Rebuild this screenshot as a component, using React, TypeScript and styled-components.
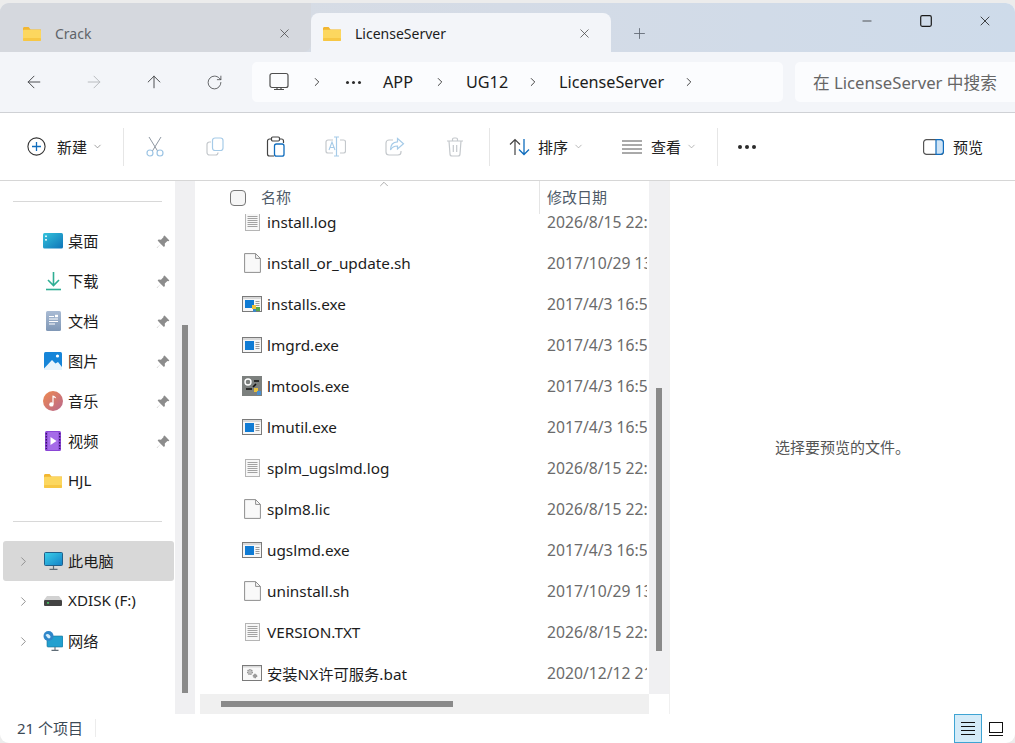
import * as React from "react";
import styled, { createGlobalStyle } from "styled-components";
import {
  ArrowLeft,
  ArrowRight,
  ArrowUp,
  ChevronDown,
  ChevronRight,
  ChevronUp,
  Minus,
  Plus,
  RotateCw,
  X,
} from "lucide-react";

const GlobalStyle = createGlobalStyle`
  html, body {
    margin: 0;
    padding: 0;
    background: #ececec;
    overflow: hidden;
  }
  * {
    box-sizing: border-box;
  }
`;

const FONT = `"Noto Sans", "Noto Sans CJK SC", sans-serif`;

const Window = styled.div`
  display: flex;
  flex-direction: column;
  width: 1015px;
  height: 740px;
  margin-top: 3px;
  background: white;
  border-radius: 9px;
  overflow: hidden;
  font-family: ${FONT};
  color: #1c1c1c;
`;

const TabBar = styled.div`
  display: flex;
  align-items: flex-end;
  height: 49px;
  flex-shrink: 0;
  background: linear-gradient(90deg, #d9dde3 0%, #d4dbe6 50%, #cedbea 100%);
`;

const Tab = styled.div<{ $active?: boolean }>`
  display: flex;
  align-items: center;
  width: ${(p) => (p.$active ? "300px" : "311px")};
  height: ${(p) => (p.$active ? "39px" : "49px")};
  padding: ${(p) => (p.$active ? "2px 19px 0 12px" : "12px 19px 0 23px")};
  background: ${(p) => (p.$active ? "#f3f5f9" : "#d5d8de")};
  border-radius: ${(p) => (p.$active ? "8px 8px 0 0" : "0 0 8px 0")};
  color: ${(p) => (p.$active ? "#1c1c1c" : "#5f6469")};
  font-size: 14px;
`;

const TabLabel = styled.span`
  flex: 1;
  margin-left: 14px;
`;

const NewTab = styled.div`
  display: flex;
  align-items: center;
  justify-content: center;
  width: 57px;
  height: 37px;
  color: #5f6670;
`;

const WindowControls = styled.div`
  display: flex;
  align-self: flex-start;
  margin-left: auto;
  padding: 8px 1px 0 0;
  color: #1a1a1a;
`;

const WindowControl = styled.div`
  display: flex;
  align-items: center;
  justify-content: center;
  width: 59px;
  height: 20px;
`;

const NavBar = styled.div`
  display: flex;
  align-items: center;
  height: 61px;
  flex-shrink: 0;
  padding-left: 4px;
  background: #f3f5f9;
  border-bottom: 1px solid #cfd1d5;
`;

const NavButton = styled.div<{ $disabled?: boolean }>`
  display: flex;
  align-items: center;
  justify-content: center;
  width: 60px;
  color: ${(p) => (p.$disabled ? "#b9bcc0" : "#4d4f52")};
`;

const AddressBox = styled.div`
  display: flex;
  align-items: center;
  width: 531px;
  height: 40px;
  margin-left: 8px;
  padding-left: 17px;
  background: #fbfcfe;
  border-radius: 5px;
  font-size: 16.2px;
  color: #1c1c1c;
`;

const Crumb = styled.span<{ $width: number; $pad?: number }>`
  display: flex;
  align-items: center;
  width: ${(p) => p.$width}px;
  padding-left: ${(p) => p.$pad ?? 0}px;
  flex-shrink: 0;
`;

const Sep = styled.span`
  display: flex;
  align-items: center;
  justify-content: center;
  width: 52px;
  flex-shrink: 0;
  color: #2a2a2a;
`;

const Dots = styled.span`
  display: flex;
  gap: 3px;
`;

const Dot = styled.i<{ $size: number }>`
  display: block;
  width: ${(p) => p.$size}px;
  height: ${(p) => p.$size}px;
  border-radius: 50%;
  background: #2b2b2b;
`;

const SearchBox = styled.div`
  display: flex;
  align-items: center;
  flex: 1;
  height: 40px;
  margin-left: 12px;
  padding-left: 18px;
  background: #fbfcfe;
  border-radius: 5px 0 0 5px;
  font-size: 16.7px;
  color: #666;
  white-space: nowrap;
`;

const Toolbar = styled.div`
  display: flex;
  align-items: center;
  height: 68px;
  flex-shrink: 0;
  background: white;
  border-bottom: 1px solid #d6d6d6;
  font-size: 15px;
  color: #222;
`;

const ToolGroup = styled.div<{ $width: number; $pad?: number; $gap?: number }>`
  display: flex;
  align-items: center;
  gap: ${(p) => p.$gap ?? 8}px;
  width: ${(p) => p.$width}px;
  padding-left: ${(p) => p.$pad ?? 0}px;
  flex-shrink: 0;
`;

const ToolDivider = styled.div`
  width: 1px;
  height: 38px;
  flex-shrink: 0;
  background: #e6e6e6;
`;

const IconButton = styled.div`
  display: flex;
  align-items: center;
  justify-content: center;
  width: 60px;
  flex-shrink: 0;
`;

const Caret = styled.span<{ $color?: string; $shift: number }>`
  display: flex;
  margin-left: ${(p) => p.$shift}px;
  color: ${(p) => p.$color ?? "#777"};
`;

const Body = styled.div`
  display: flex;
  height: 533px;
  flex-shrink: 0;
`;

const Sidebar = styled.nav`
  width: 175px;
  flex-shrink: 0;
  padding: 20px 0 0 3px;
  font-size: 15.2px;
`;

const Divider = styled.div`
  height: 1px;
  margin: 0 13px 19px 10px;
  background: #d8d8d8;
`;

const SideGroup = styled.div`
  margin-bottom: 20px;
`;

const SideRow = styled.div<{ $selected?: boolean; $tree?: boolean }>`
  display: flex;
  align-items: center;
  height: 40px;
  padding-left: ${(p) => (p.$tree ? "13px" : "40px")};
  background: ${(p) => (p.$selected ? "#d8d8d8" : "transparent")};
  border-radius: 3px;
  width: 171px;
`;

const Expander = styled.span`
  display: flex;
  width: 27px;
  margin-right: 0;
  color: #8c8c8c;
`;

const SideIcon = styled.span`
  display: flex;
  align-items: center;
  justify-content: center;
  width: 20px;
  height: 24px;
  margin-right: 5px;
`;

const SideLabel = styled.span`
  flex: 1;
  margin-top: -2px;
  white-space: nowrap;
`;

const PinSlot = styled.span`
  display: flex;
  margin: 2px 4px 0 0;
`;

const VTrack = styled.div<{ $width: number; $margin: number }>`
  display: flex;
  justify-content: center;
  width: ${(p) => p.$width}px;
  flex-shrink: 0;
  margin-right: ${(p) => p.$margin}px;
  background: #f0f0f2;
`;

const VThumb = styled.div<{ $top: number; $height: number }>`
  width: 6px;
  height: ${(p) => p.$height}px;
  margin-top: ${(p) => p.$top}px;
  background: #8a8a8a;
`;

const ListColumn = styled.section`
  display: flex;
  flex-direction: column;
  width: 449px;
  flex-shrink: 0;
`;

const ListHeader = styled.div`
  position: relative;
  display: flex;
  align-items: center;
  height: 33px;
  flex-shrink: 0;
  font-size: 15px;
  color: #4f5b69;
`;

const SortMark = styled.span`
  position: absolute;
  left: 177px;
  top: -4px;
  display: flex;
  color: #777;
`;

const HeaderCheck = styled.span`
  width: 16px;
  height: 16px;
  margin: 0 15px 0 30px;
  background: #f6f6f6;
  border: 1px solid #777;
  border-radius: 4px;
  flex-shrink: 0;
`;

const HeaderName = styled.span`
  width: 278px;
  margin-top: -3px;
  flex-shrink: 0;
`;

const HeaderDate = styled.span`
  display: flex;
  align-items: center;
  height: 100%;
  padding: 0 0 3px 7px;
  border-left: 1px solid #e5e5e5;
`;

const Rows = styled.div`
  flex: 1;
  overflow: hidden;
`;

const RowsInner = styled.div`
  margin-top: -13px;
`;

const FileRow = styled.div`
  display: flex;
  align-items: center;
  height: 41px;
  font-size: 15.3px;
`;

const FileIconSlot = styled.span`
  display: flex;
  align-items: center;
  justify-content: center;
  width: 20px;
  height: 22px;
  margin: 0 5px 0 42px;
  flex-shrink: 0;
`;

const FileName = styled.span`
  width: 280px;
  flex-shrink: 0;
  white-space: nowrap;
`;

const FileDate = styled.span`
  width: 100px;
  overflow: hidden;
  font-size: 15.7px;
  white-space: nowrap;
  color: #6b6b6b;
`;

const HTrack = styled.div`
  display: flex;
  align-items: center;
  height: 20px;
  flex-shrink: 0;
  padding-left: 21px;
  background: #f0f0f0;
`;

const HThumb = styled.div`
  width: 232px;
  height: 6px;
  background: #8a8a8a;
`;

const ListAside = styled.div`
  display: flex;
  flex-direction: column;
  width: 20px;
  flex-shrink: 0;
`;

const AsideTrack = styled(VTrack)`
  flex: 1;
  margin-right: 0;
`;

const AsideCorner = styled.div`
  height: 20px;
`;

const Preview = styled.aside`
  display: flex;
  align-items: center;
  justify-content: center;
  flex: 1;
  padding-bottom: 2px;
  border-left: 1px solid #f0f0f0;
  font-size: 15px;
  color: #555;
`;

const StatusBar = styled.footer`
  display: flex;
  align-items: center;
  flex: 1;
  padding-left: 17px;
  font-size: 15px;
  color: #3c4a57;
`;

const StatusText = styled.span`
  width: 79px;
  height: 18px;
  margin-top: -2px;
  line-height: 18px;
  border-right: 1px solid #ececec;
`;

const ViewToggle = styled.div`
  display: flex;
  align-self: stretch;
  margin-left: auto;
  margin-right: 5px;
`;

const ViewButton = styled.div<{ $active?: boolean }>`
  display: flex;
  align-items: center;
  justify-content: center;
  width: 28px;
  background: ${(p) => (p.$active ? "#d4ebf8" : "transparent")};
  border: 1px solid ${(p) => (p.$active ? "#3fa4d3" : "transparent")};
`;

const Ic = ({ w, h, children }: { w: number; h: number; children: React.ReactNode }) => (
  <svg width={w} height={h} viewBox={`0 0 ${w} ${h}`} fill="none">
    {children}
  </svg>
);

const Folder = () => (
  <Ic w={18} h={14}>
    <path d="M0 1.5C0 .7.6 0 1.4 0h4.2l2 2.4H18V4H0z" fill="#f2b631" />
    <rect x="0" y="2.8" width="18" height="11.2" rx="1" fill="#fcd75f" />
    <rect x="0" y="11" width="18" height="3" rx="1" fill="#f7c744" />
  </Ic>
);

const Pc = () => (
  <Ic w={20} h={20}>
    <path d="M3 1.5h14a2 2 0 0 1 2 2v10a2 2 0 0 1-2 2H3a2 2 0 0 1-2-2v-10a2 2 0 0 1 2-2zM5 17.5h10" stroke="#4e4e4e" strokeWidth="1.2" />
    <path d="M8 15.5v2M12 15.5v2" stroke="#4e4e4e" strokeWidth="1.2" />
  </Ic>
);

const NewIcon = () => (
  <Ic w={19} h={19}>
    <circle cx="9.5" cy="9.5" r="8.6" stroke="#333" strokeWidth="1.1" />
    <path d="M9.5 5v9M5 9.5h9" stroke="#0f6cbd" strokeWidth="1.3" />
  </Ic>
);

const CutIcon = () => (
  <Ic w={18} h={21}>
    <path d="M3 1l8.6 14M15 1L6.4 15" stroke="#8f98a3" strokeWidth="1" />
    <circle cx="4" cy="17" r="3" stroke="#9cc4e4" strokeWidth="1.2" />
    <circle cx="14" cy="17" r="3" stroke="#9cc4e4" strokeWidth="1.2" />
  </Ic>
);

const CopyIcon = () => (
  <Ic w={18} h={19}>
    <rect x="6.5" y="1" width="10.5" height="12.5" rx="2.5" stroke="#a6cbe8" strokeWidth="1.2" />
    <path d="M5 5H3.5A2.5 2.5 0 0 0 1 7.5v8A2.5 2.5 0 0 0 3.5 18h6a2.5 2.5 0 0 0 2.5-2.5" stroke="#c4c8cc" strokeWidth="1.2" />
  </Ic>
);

const PasteIcon = () => (
  <Ic w={19} h={21}>
    <path d="M6 3H3.5A2 2 0 0 0 1.5 5v13a2 2 0 0 0 2 2H8" stroke="#444" strokeWidth="1.2" />
    <path d="M13 3h2.5a2 2 0 0 1 2 2v2" stroke="#444" strokeWidth="1.2" />
    <rect x="5.5" y="1" width="8" height="4" rx="1.2" stroke="#444" strokeWidth="1.2" />
    <rect x="8.5" y="8" width="9.5" height="12.2" rx="2" stroke="#0f6cbd" strokeWidth="1.3" />
  </Ic>
);

const RenameIcon = () => (
  <Ic w={21} h={21}>
    <path d="M8 4H3a2 2 0 0 0-2 2v9a2 2 0 0 0 2 2h5M15 4h3.5a2 2 0 0 1 2 2v9a2 2 0 0 1-2 2H15" stroke="#c4c8cc" strokeWidth="1.2" />
    <path d="M11.5 1v19M9 1h5M9 20h5" stroke="#a6cbe8" strokeWidth="1.2" />
    <path d="M4 14l3-8 3 8M5 11.5h4" stroke="#a6cbe8" strokeWidth="1.1" />
  </Ic>
);

const ShareIcon = () => (
  <Ic w={20} h={19}>
    <path d="M8 3H4a3 3 0 0 0-3 3v9a3 3 0 0 0 3 3h9a3 3 0 0 0 3-3v-1" stroke="#c4c8cc" strokeWidth="1.2" />
    <path d="M12.5 1.5l6 5.2-6 5.3V9C9 9 7 10 5.5 13c0-5 2.5-8 7-8.2z" stroke="#a6cbe8" strokeWidth="1.2" />
  </Ic>
);

const TrashIcon = () => (
  <Ic w={18} h={20}>
    <path d="M1 4h16M6.5 4V2.5A1.5 1.5 0 0 1 8 1h2a1.5 1.5 0 0 1 1.5 1.5V4" stroke="#c4c8cc" strokeWidth="1.2" />
    <path d="M3 4l1 13a2 2 0 0 0 2 2h6a2 2 0 0 0 2-2l1-13M7.3 8v7M10.7 8v7" stroke="#c4c8cc" strokeWidth="1.2" />
  </Ic>
);

const SortIcon = () => (
  <Ic w={21} h={18}>
    <path d="M6 17V1.5M1 6.5l5-5 5 5" stroke="#444" strokeWidth="1.2" />
    <path d="M15 1v15.5M10 11.5l5 5 5-5" stroke="#0f6cbd" strokeWidth="1.3" />
  </Ic>
);

const ViewIcon = () => (
  <Ic w={20} h={14}>
    <path d="M0 1h20M0 5h20M0 9h20M0 13h20" stroke="#555" strokeWidth="1" />
  </Ic>
);

const PreviewIcon = () => (
  <Ic w={21} h={16}>
    <rect x=".6" y=".6" width="19.8" height="14.8" rx="3" stroke="#555" strokeWidth="1.2" />
    <path d="M13 .6h4.4a3 3 0 0 1 3 3v8.8a3 3 0 0 1-3 3H13z" fill="#cfe4f6" stroke="#0f6cbd" strokeWidth="1.2" />
  </Ic>
);

const Pin = () => (
  <svg width="14" height="14" viewBox="0 0 14 14" fill="#8c8c8c">
    <path d="M8.6.6l4.8 4.8-1.1.8-.9-.2-2.6 2.6.1 2.4-1 1L4.8 8.9 1.2 12.8.8 13l.2-.5 3.8-3.6L1.6 5.6l1-1 2.4.1 2.6-2.6-.2-.9z" />
  </svg>
);

const Desktop = () => (
  <svg width="20" height="16" viewBox="0 0 20 16">
    <defs>
      <linearGradient id="desk" x1="0" y1="0" x2="1" y2="1">
        <stop offset="0" stopColor="#34c3dc" />
        <stop offset="1" stopColor="#0f74b8" />
      </linearGradient>
    </defs>
    <rect width="20" height="15.5" rx="1.5" fill="url(#desk)" />
    <rect x="2" y="2.5" width="2" height="1.6" fill="#d6f4fa" />
    <rect x="2" y="6" width="2" height="1.6" fill="#d6f4fa" />
  </svg>
);

const Download = () => (
  <svg width="15" height="20" viewBox="0 0 15 20" fill="none" stroke="#2fae94" strokeWidth="1.6">
    <path d="M7.5 1v13M2 9l5.5 5.5L13 9" />
    <path d="M0 18.5h15" />
  </svg>
);

const Docs = () => (
  <svg width="15" height="20" viewBox="0 0 15 20">
    <defs>
      <linearGradient id="doc" x1="0" y1="0" x2="0" y2="1">
        <stop offset="0" stopColor="#a9bbd4" />
        <stop offset="1" stopColor="#7f97b6" />
      </linearGradient>
    </defs>
    <rect width="15" height="20" rx="1.5" fill="url(#doc)" />
    <path d="M3 5.5h5M3 8h9M3 10.5h9M3 13h6" stroke="white" strokeWidth="1" />
    <rect x="9" y="3.8" width="3" height="2.4" fill="white" />
  </svg>
);

const Pictures = () => (
  <svg width="18" height="18" viewBox="0 0 18 18">
    <rect width="18" height="18" rx="1.5" fill="#1685d8" />
    <circle cx="13.5" cy="4" r="1.6" fill="white" />
    <path d="M0 16.5L8 8l3.5 3.5L14 10l4 5v3H0z" fill="#e8f4fc" />
  </svg>
);

const Music = () => (
  <svg width="20" height="20" viewBox="0 0 20 20">
    <defs>
      <linearGradient id="mus" x1="0" y1="0" x2="1" y2="1">
        <stop offset="0" stopColor="#ef8a4e" />
        <stop offset="1" stopColor="#b8678f" />
      </linearGradient>
    </defs>
    <circle cx="10" cy="10" r="10" fill="url(#mus)" />
    <circle cx="8.4" cy="13.4" r="2.2" fill="white" />
    <path d="M9.4 13V4.5c2 .2 3.5 1.2 3.8 3-1-.7-1.9-1-2.6-1V13z" fill="white" />
  </svg>
);

const Video = () => (
  <svg width="16" height="20" viewBox="0 0 16 20">
    <rect width="16" height="20" rx="1.5" fill="#8a45d6" />
    <rect x="2.6" y="1" width="10.8" height="18" fill="#a56be8" />
    <path d="M5.5 6l6 4-6 4z" fill="white" />
    <path d="M1.3 2v16M14.7 2v16" stroke="#2f1160" strokeWidth="1.2" strokeDasharray="1.4 1.6" />
  </svg>
);

const Computer = () => (
  <svg width="19" height="18" viewBox="0 0 19 18">
    <defs>
      <linearGradient id="pc" x1="0" y1="0" x2="1" y2="1">
        <stop offset="0" stopColor="#3cd0ea" />
        <stop offset="1" stopColor="#1381c7" />
      </linearGradient>
    </defs>
    <rect x=".5" y=".5" width="18" height="13" rx="1" fill="url(#pc)" stroke="#205f8a" />
    <path d="M9.5 14v3M5.5 17.3h8" stroke="#5f6c76" strokeWidth="1.2" />
  </svg>
);

const Disk = () => (
  <svg width="18" height="10" viewBox="0 0 18 10">
    <path d="M3 0h12l3 4H0z" fill="#d2d2d2" />
    <rect y="4" width="18" height="6" rx="1" fill="#434343" />
    <rect x="3" y="6.2" width="2" height="1.4" fill="#49d66b" />
  </svg>
);

const Network = () => (
  <svg width="20" height="20" viewBox="0 0 20 20">
    <rect x="4" y="5" width="16" height="11" rx="1" fill="#22a0cf" stroke="#1a6f95" strokeWidth=".6" />
    <path d="M12 16v3M8.5 19.4h7" stroke="#5f6c76" strokeWidth="1.1" />
    <circle cx="5.5" cy="5" r="5" fill="#2f86c9" />
    <path d="M2.5 4c1.5-1.5 3-1 4 0s1.5 2 .5 3-2.5 0-3-1-1-1-1.5-2z" fill="#d6eefb" />
  </svg>
);

const LogFile = () => (
  <svg width="15" height="18" viewBox="0 0 15 18" fill="none">
    <rect x=".5" y=".5" width="14" height="17" fill="#f7f7f7" stroke="#b5b5b5" />
    <path d="M2.5 3.5h10M2.5 5.5h10M2.5 7.5h10M2.5 9.5h10M2.5 11.5h10M2.5 13.5h10" stroke="#a2a2a2" />
  </svg>
);

const PlainFile = () => (
  <svg width="17" height="20" viewBox="0 0 17 20">
    <path d="M.6.6h11l4.8 4.8v14H.6z" fill="#f9f9f9" stroke="#8f8f8f" />
    <path d="M11.6.6v4.8h4.8" fill="none" stroke="#8f8f8f" />
  </svg>
);

const AppFrame = ({ children }: { children?: React.ReactNode }) => (
  <svg width="20" height="16" viewBox="0 0 20 16">
    <rect x=".5" y=".5" width="19" height="15" fill="#f6f6f6" stroke="#7a7a7a" />
    <path d="M1 1h18v2H1z" fill="#d9d9d9" />
    <path d="M13.5 5.5h4M13.5 7.5h4M13.5 9.5h4M13.5 11.5h4" stroke="#9a9a9a" />
    {children}
  </svg>
);

const ExeFile = () => (
  <AppFrame>
    <rect x="3" y="4" width="9" height="9" fill="#0f7bd4" />
  </AppFrame>
);

const InstallsFile = () => (
  <AppFrame>
    <rect x="3" y="4" width="9" height="8" fill="#0f7bd4" />
    <rect x="10" y="9" width="4" height="4" fill="#f0c23a" />
    <rect x="14" y="11" width="4" height="4" fill="#58a848" />
    <rect x="11" y="13" width="3" height="3" fill="#3d86c6" />
  </AppFrame>
);

const ToolsFile = () => (
  <svg width="20" height="20" viewBox="0 0 20 20">
    <rect width="20" height="20" fill="#7c807e" />
    <circle cx="6" cy="6" r="3" fill="none" stroke="white" strokeWidth="1.4" />
    <path d="M4 13h6M12 5h5M14 8l-3 3" stroke="#111" strokeWidth="1.6" />
    <rect x="12" y="12" width="4" height="4" fill="#e7c13c" />
    <rect x="15" y="15" width="4" height="4" fill="#4a8fcf" />
  </svg>
);

const BatFile = () => (
  <svg width="20" height="16" viewBox="0 0 20 16">
    <rect x=".5" y=".5" width="19" height="15" fill="#f8f8f8" stroke="#7a7a7a" />
    <path d="M1 1h18v1.5H1z" fill="#d9d9d9" />
    <circle cx="8" cy="7" r="2.4" fill="#c0c0c0" stroke="#8c8c8c" strokeWidth="1.2" strokeDasharray="1.2 .7" />
    <circle cx="13" cy="11" r="1.8" fill="#9a9a9a" stroke="#7a7a7a" strokeDasharray="1 .6" />
  </svg>
);

const ListViewIcon = () => (
  <Ic w={14} h={14}>
    <path d="M0 .5h14M0 4.5h14M0 8.5h14M0 12.5h14" stroke="#111" strokeWidth="1" />
  </Ic>
);

const TileViewIcon = () => (
  <Ic w={14} h={14}>
    <rect x=".5" y=".5" width="13" height="10" stroke="#111" fill="none" />
    <path d="M0 13.5h14" stroke="#111" />
  </Ic>
);

const pinned: { name: string; icon: React.ReactNode; pin?: boolean }[] = [
  { name: "桌面", icon: <Desktop />, pin: true },
  { name: "下载", icon: <Download />, pin: true },
  { name: "文档", icon: <Docs />, pin: true },
  { name: "图片", icon: <Pictures />, pin: true },
  { name: "音乐", icon: <Music />, pin: true },
  { name: "视频", icon: <Video />, pin: true },
  { name: "HJL", icon: <Folder /> },
];

const tree: { name: string; icon: React.ReactNode; selected?: boolean }[] = [
  { name: "此电脑", icon: <Computer />, selected: true },
  { name: "XDISK (F:)", icon: <Disk /> },
  { name: "网络", icon: <Network /> },
];

const files: { name: string; date: string; icon: React.ReactNode }[] = [
  { name: "install.log", date: "2026/8/15 22:53", icon: <LogFile /> },
  { name: "install_or_update.sh", date: "2017/10/29 13:20", icon: <PlainFile /> },
  { name: "installs.exe", date: "2017/4/3 16:54", icon: <InstallsFile /> },
  { name: "lmgrd.exe", date: "2017/4/3 16:54", icon: <ExeFile /> },
  { name: "lmtools.exe", date: "2017/4/3 16:54", icon: <ToolsFile /> },
  { name: "lmutil.exe", date: "2017/4/3 16:54", icon: <ExeFile /> },
  { name: "splm_ugslmd.log", date: "2026/8/15 22:53", icon: <LogFile /> },
  { name: "splm8.lic", date: "2026/8/15 22:53", icon: <PlainFile /> },
  { name: "ugslmd.exe", date: "2017/4/3 16:54", icon: <ExeFile /> },
  { name: "uninstall.sh", date: "2017/10/29 13:20", icon: <PlainFile /> },
  { name: "VERSION.TXT", date: "2026/8/15 22:53", icon: <LogFile /> },
  { name: "安装NX许可服务.bat", date: "2020/12/12 21:30", icon: <BatFile /> },
];

export default function App() {
  return (
    <Window>
      <GlobalStyle />
      <TabBar>
        <Tab>
          <Folder />
          <TabLabel>Crack</TabLabel>
          <X size={15} strokeWidth={1.2} color="#444" />
        </Tab>
        <Tab $active>
          <Folder />
          <TabLabel>LicenseServer</TabLabel>
          <X size={15} strokeWidth={1.2} color="#444" />
        </Tab>
        <NewTab>
          <Plus size={17} strokeWidth={1.2} />
        </NewTab>
        <WindowControls>
          <WindowControl>
            <Minus size={14} strokeWidth={1.2} />
          </WindowControl>
          <WindowControl>
            <Ic w={12} h={12}>
              <rect x=".7" y=".7" width="10.6" height="10.6" rx="1.5" stroke="#1a1a1a" strokeWidth="1.2" />
            </Ic>
          </WindowControl>
          <WindowControl>
            <X size={16} strokeWidth={1.2} />
          </WindowControl>
        </WindowControls>
      </TabBar>

      <NavBar>
        <NavButton>
          <ArrowLeft size={20} strokeWidth={1.2} />
        </NavButton>
        <NavButton $disabled>
          <ArrowRight size={20} strokeWidth={1.2} />
        </NavButton>
        <NavButton>
          <ArrowUp size={20} strokeWidth={1.2} />
        </NavButton>
        <NavButton>
          <RotateCw size={17} strokeWidth={1.2} />
        </NavButton>
        <AddressBox>
          <Crumb $width={22}>
            <Pc />
          </Crumb>
          <Sep>
            <ChevronRight size={14} strokeWidth={1.5} />
          </Sep>
          <Crumb $width={40} $pad={3}>
            <Dots>
              <Dot $size={3} />
              <Dot $size={3} />
              <Dot $size={3} />
            </Dots>
          </Crumb>
          <Crumb $width={31}>APP</Crumb>
          <Sep>
            <ChevronRight size={14} strokeWidth={1.5} />
          </Sep>
          <Crumb $width={41}>UG12</Crumb>
          <Sep>
            <ChevronRight size={14} strokeWidth={1.5} />
          </Sep>
          <Crumb $width={104}>LicenseServer</Crumb>
          <Sep>
            <ChevronRight size={14} strokeWidth={1.5} />
          </Sep>
        </AddressBox>
        <SearchBox>在 LicenseServer 中搜索</SearchBox>
      </NavBar>

      <Toolbar>
        <ToolGroup $width={123} $pad={27} $gap={11}>
          <NewIcon />
          <span>新建</span>
          <Caret $shift={-6}>
            <ChevronDown size={11} strokeWidth={1.5} />
          </Caret>
        </ToolGroup>
        <ToolDivider />
        <ToolGroup $width={365} $pad={1} $gap={0}>
          <IconButton><CutIcon /></IconButton>
          <IconButton><CopyIcon /></IconButton>
          <IconButton><PasteIcon /></IconButton>
          <IconButton><RenameIcon /></IconButton>
          <IconButton><ShareIcon /></IconButton>
          <IconButton><TrashIcon /></IconButton>
        </ToolGroup>
        <ToolDivider />
        <ToolGroup $width={112} $pad={19}>
          <SortIcon />
          <span>排序</span>
          <Caret $color="#999" $shift={-3}>
            <ChevronDown size={11} strokeWidth={1.5} />
          </Caret>
        </ToolGroup>
        <ToolGroup $width={115} $pad={20} $gap={9}>
          <ViewIcon />
          <span>查看</span>
          <Caret $color="#999" $shift={-4}>
            <ChevronDown size={11} strokeWidth={1.5} />
          </Caret>
        </ToolGroup>
        <ToolDivider />
        <ToolGroup $width={205} $pad={20} $gap={0}>
          <Dots>
            <Dot $size={4} />
            <Dot $size={4} />
            <Dot $size={4} />
          </Dots>
        </ToolGroup>
        <ToolGroup $width={90} $gap={9}>
          <PreviewIcon />
          <span>预览</span>
        </ToolGroup>
      </Toolbar>

      <Body>
        <Sidebar>
          <Divider />
          <SideGroup>
            {pinned.map((item) => (
              <SideRow key={item.name}>
                <SideIcon>{item.icon}</SideIcon>
                <SideLabel>{item.name}</SideLabel>
                {item.pin && (
                  <PinSlot>
                    <Pin />
                  </PinSlot>
                )}
              </SideRow>
            ))}
          </SideGroup>
          <Divider />
          {tree.map((item) => (
            <SideRow key={item.name} $tree $selected={item.selected}>
              <Expander>
                <ChevronRight size={15} strokeWidth={1.5} />
              </Expander>
              <SideIcon>{item.icon}</SideIcon>
              <SideLabel>{item.name}</SideLabel>
            </SideRow>
          ))}
        </Sidebar>
        <VTrack $width={20} $margin={5}>
          <VThumb $top={144} $height={368} />
        </VTrack>
        <ListColumn>
          <ListHeader>
            <SortMark>
              <ChevronUp size={14} strokeWidth={1} />
            </SortMark>
            <HeaderCheck />
            <HeaderName>名称</HeaderName>
            <HeaderDate>修改日期</HeaderDate>
          </ListHeader>
          <Rows>
            <RowsInner>
              {files.map((file) => (
                <FileRow key={file.name}>
                  <FileIconSlot>{file.icon}</FileIconSlot>
                  <FileName>{file.name}</FileName>
                  <FileDate>{file.date}</FileDate>
                </FileRow>
              ))}
            </RowsInner>
          </Rows>
          <HTrack>
            <HThumb />
          </HTrack>
        </ListColumn>
        <ListAside>
          <AsideTrack $width={20} $margin={0}>
            <VThumb $top={207} $height={263} />
          </AsideTrack>
          <AsideCorner />
        </ListAside>
        <Preview>选择要预览的文件。</Preview>
      </Body>

      <StatusBar>
        <StatusText>21 个项目</StatusText>
        <ViewToggle>
          <ViewButton $active>
            <ListViewIcon />
          </ViewButton>
          <ViewButton>
            <TileViewIcon />
          </ViewButton>
        </ViewToggle>
      </StatusBar>
    </Window>
  );
}
